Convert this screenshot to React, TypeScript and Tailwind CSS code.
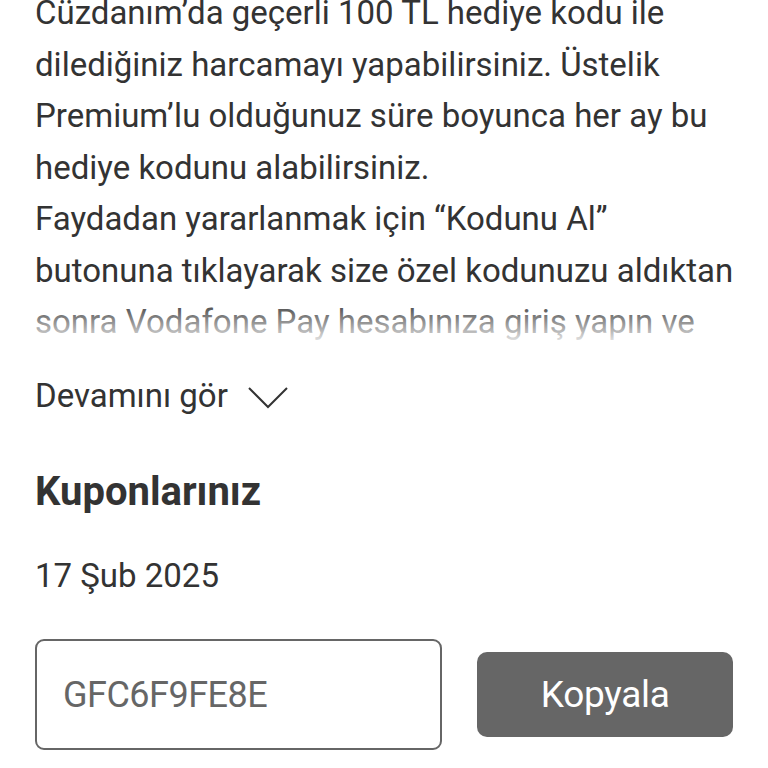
import React from 'react';

const lines = [
  'Cüzdanım’da geçerli 100 TL hediye kodu ile',
  'dilediğiniz harcamayı yapabilirsiniz. Üstelik',
  'Premium’lu olduğunuz süre boyunca her ay bu',
  'hediye kodunu alabilirsiniz.',
  'Faydadan yararlanmak için “Kodunu Al”',
  'butonuna tıklayarak size özel kodunuzu aldıktan',
  'sonra Vodafone Pay hesabınıza giriş yapın ve',
];

export default function App() {
  return (
    <div
      className="w-[768px] h-[768px] overflow-hidden bg-white text-[#333333] px-[35px]"
      style={{ fontFamily: 'Roboto, "Noto Sans", sans-serif' }}
    >
      {/* Description, clipped with fade */}
      <div className="relative -mt-[13px] h-[361px] overflow-hidden">
        <p className="text-[33px] leading-[51.5px] whitespace-nowrap">
          {lines.map((l, i) => (
            <span key={i} className="block">
              {l}
            </span>
          ))}
        </p>
        <div className="absolute left-0 right-0 bottom-0 h-[44px] bg-gradient-to-b from-white/10 to-white" />
      </div>

      {/* Show more */}
      <button className="mt-[28px] flex items-center gap-[20px] text-[33px] leading-[40px] text-[#333333]">
        <span>Devamını gör</span>
        <svg width="40" height="22" viewBox="0 0 40 22" fill="none" className="mt-[4px]">
          <path d="M1 1 L20 20 L39 1" stroke="#333333" strokeWidth="2" />
        </svg>
      </button>

      {/* Coupons */}
      <h2 className="mt-[54px] text-[40px] leading-[44px] font-bold">Kuponlarınız</h2>

      <div className="mt-[42px] text-[33px] leading-[40px]">17 Şub 2025</div>

      <div className="mt-[43px] flex items-center gap-[35px]">
        <div className="w-[408px] h-[111px] border-2 border-[#666666] rounded-[9px] flex items-center px-[26px] text-[36px] text-[#666666] tracking-[-0.5px]">
          GFC6F9FE8E
        </div>
        <button className="w-[256px] h-[85px] rounded-[10px] bg-[#666666] text-white text-[37px] tracking-[-0.3px]">
          Kopyala
        </button>
      </div>
    </div>
  );
}
